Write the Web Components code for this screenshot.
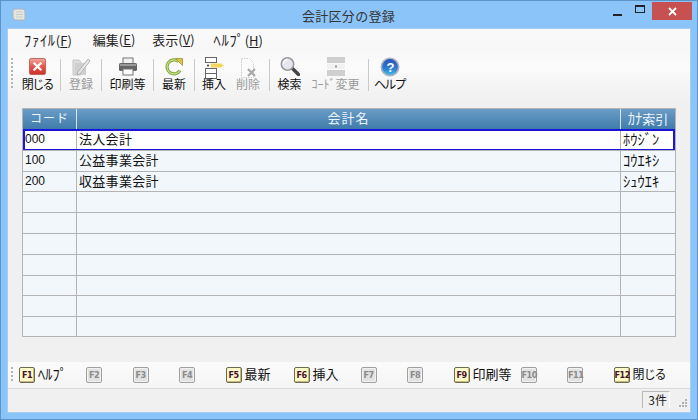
<!DOCTYPE html>
<html lang="ja">
<head>
<meta charset="utf-8">
<title>会計区分の登録</title>
<style>
  html, body { margin: 0; padding: 0; height: 100%; overflow: hidden; }
  body { font-family: "Noto Sans CJK JP", "Liberation Sans", sans-serif; font-feature-settings: "palt"; }
</style>
</head>
<body>
<app-window>
  <title-bar title="会計区分の登録"></title-bar>
  <menu-bar></menu-bar>
  <tool-bar>
    <tool-button width="45" label="閉じる" style="letter-spacing:-.5px"><svg viewBox="0 0 20 20" width="19" height="19"><defs><linearGradient id="r" x1="0" y1="0" x2="0" y2="1"><stop offset="0" stop-color="#f4a9a0"/><stop offset=".5" stop-color="#e2574c"/><stop offset="1" stop-color="#c9302a"/></linearGradient></defs><rect x="1.500" y="1.500" width="17" height="17" rx="2" fill="url(#r)" stroke="#b9605c"/><path d="M6 6l8 8M14 6l-8 8" stroke="#fff" stroke-width="2.400"/></svg></tool-button>
    <tool-sep></tool-sep>
    <tool-button width="40" label="登録" disabled><svg viewBox="0 0 20 20" width="20" height="20"><path d="M2 3h6l2 2v13H2z" fill="#dcdcdc" stroke="#c8c8c8"/><path d="M4 6h11v12H4z" fill="#cfcfcf"/><path d="M7 15L17 2l2 2L9 17l-3 1z" fill="#e8e8e8" stroke="#b0b0b0"/></svg></tool-button>
    <tool-sep></tool-sep>
    <tool-button width="51" label="印刷等"><svg viewBox="0 0 20 20" width="20" height="20"><rect x="5" y="1" width="10" height="6" fill="#f2f2f2" stroke="#777"/><rect x="1" y="6" width="18" height="8" rx="1.500" fill="#666"/><rect x="2" y="7" width="16" height="2" fill="#999"/><rect x="5" y="12" width="10" height="6" fill="#fafafa" stroke="#777"/></svg></tool-button>
    <tool-sep></tool-sep>
    <tool-button width="40" label="最新"><svg viewBox="0 0 20 20" width="20" height="20"><path d="M16 13.500A7 7 0 1 1 14.500 4.500" fill="none" stroke="#7fa63a" stroke-width="3.200"/><path d="M16 13.500A7 7 0 1 1 14.500 4.500" fill="none" stroke="#c9e08a" stroke-width="1.200"/><path d="M11.500 1.500h7v7z" fill="#e0c23c" stroke="#97862a" stroke-width=".7"/></svg></tool-button>
    <tool-sep></tool-sep>
    <tool-button width="38" label="挿入"><svg viewBox="0 0 20 22" width="20" height="22"><rect x="1.500" y=".5" width="11" height="5" fill="#fff" stroke="#666"/><rect x="1.500" y="11.500" width="11" height="5" fill="#fff" stroke="#666"/><rect x="1.500" y="16.500" width="11" height="5" fill="#fff" stroke="#666"/><circle cx="4" cy="8.500" r="1" fill="#333"/><path d="M7 6.500h10l3 2-3 2H7z" fill="#f2d35c"/></svg></tool-button>
    <tool-button width="36" label="削除" disabled style="padding-right:6px"><svg viewBox="0 0 20 22" width="20" height="22"><path d="M3.500 1.500h8l4 4v15h-12z" fill="#fbfbfb" stroke="#ccc" stroke-dasharray="1.500 1"/><path d="M10 12l7 7M17 12l-7 7" stroke="#a8a8a8" stroke-width="2.200"/></svg></tool-button>
    <tool-sep></tool-sep>
    <tool-button width="39" label="検索"><svg viewBox="0 0 20 19" width="20" height="19"><path d="M12.500 11.500l6 6" stroke="#444" stroke-width="3.400" stroke-linecap="round"/><circle cx="7.500" cy="7" r="6.200" fill="#e4e8ee" stroke="#9a9a9a" stroke-width="1.600"/><path d="M3.500 6.500a4 4 0 0 1 4-4" stroke="#fff" stroke-width="1.500" fill="none"/></svg></tool-button>
    <tool-button width="59" label="ｺｰﾄﾞ変更" disabled style="padding-right:6px"><svg viewBox="0 0 20 19" width="20" height="19"><rect x="1" y="0" width="18" height="6" fill="#cfcfcf"/><rect x="1" y="13" width="18" height="6" fill="#cfcfcf"/><rect x="1" y="7" width="18" height="5" fill="#f2f2f2"/><rect x="9" y="8.500" width="2" height="2" fill="#999"/></svg></tool-button>
    <tool-sep></tool-sep>
    <tool-button width="41" label="ヘルプ" style="letter-spacing:-1px"><svg viewBox="0 0 20 20" width="20" height="20"><defs><linearGradient id="b" x1="0" y1="0" x2="0" y2="1"><stop offset="0" stop-color="#2a4fb8"/><stop offset=".6" stop-color="#2f7fd0"/><stop offset="1" stop-color="#45c0e8"/></linearGradient></defs><circle cx="10" cy="10" r="8.700" fill="url(#b)" stroke="#a9b4c4" stroke-width="1.600"/><text x="10" y="14.500" text-anchor="middle" font-family="Liberation Sans" font-weight="700" font-size="13" fill="#fff">?</text></svg></tool-button>
  </tool-bar>
  <data-grid></data-grid>
  <fkey-bar>
    <fkey-item width="67" on kana label="ﾍﾙﾌﾟ">F1</fkey-item>
    <fkey-item width="46.500">F2</fkey-item>
    <fkey-item width="46.500">F3</fkey-item>
    <fkey-item width="46.500">F4</fkey-item>
    <fkey-item width="68" on label="最新">F5</fkey-item>
    <fkey-item width="67" on label="挿入">F6</fkey-item>
    <fkey-item width="46.500">F7</fkey-item>
    <fkey-item width="46.500">F8</fkey-item>
    <fkey-item width="67" on label="印刷等">F9</fkey-item>
    <fkey-item width="46.500">F10</fkey-item>
    <fkey-item width="46.500">F11</fkey-item>
    <fkey-item width="60" on label="閉じる" style="font-size:12px">F12</fkey-item>
  </fkey-bar>
  <status-bar>3件</status-bar>
</app-window>

<script>
class AppWindow extends HTMLElement {
  constructor() {
    super();
    this.attachShadow({mode: 'open'}).innerHTML = `
      <style>
        :host {
          display: block;
          box-sizing: border-box;
          width: 698px;
          height: 420px;
          background: #8bc4f8;
          border: 1px solid #5b94c8;
          padding: 0 7px 7px;
        }
        .client {
          display: flex;
          flex-direction: column;
          height: 100%;
        }
        ::slotted(title-bar) { margin: 0 -7px; }
        .inner {
          flex: 1;
          display: flex;
          flex-direction: column;
          background: #f0f0f0;
          box-shadow: 0 0 0 1px #a9cdee;
          min-height: 0;
        }
      </style>
      <div class="client"><slot name="title"></slot><div class="inner"><slot></slot></div></div>
    `;
  }
  connectedCallback() {
    this.querySelector('title-bar').slot = 'title';
  }
}

class TitleBar extends HTMLElement {
  constructor() {
    super();
    this.attachShadow({mode: 'open'}).innerHTML = `
      <style>
        :host {
          display: flex;
          align-items: flex-start;
          height: 28px;
          color: #333;
          font-size: 13px;
          font-feature-settings: normal;
        }
        .doc { margin: 7px 0 0 11px; }
        .name { flex: 1; text-align: center; line-height: 30px; padding-left: 65px; letter-spacing: .3px; }
        .btn { display: flex; align-items: center; justify-content: center; height: 18px; margin-top: 1px; }
        .min { width: 23px; }
        .max { width: 22px; margin-right: 1px; }
        .close { width: 40px; background: #c75050; margin-right: 5px; }
      </style>
      <svg class="doc" width="14" height="13" viewBox="0 0 14 13"><path d="M1 2l2-1h8l2 2v9H3l-2-2z" fill="#e6e6dc" stroke="#a8b4c0"/><path d="M4 4h7M4 6.500h7M4 9h7" stroke="#c6cdd4"/></svg>
      <span class="name"></span>
      <div class="btn min"><svg width="9" height="2" style="margin-top:7px"><rect width="9" height="2" fill="#222"/></svg></div>
      <div class="btn max"><svg width="10" height="8" style="margin-top:-5px"><rect x=".5" y=".5" width="9" height="7" fill="none" stroke="#222"/><rect x="1" y="1" width="8" height="1" fill="#222"/></svg></div>
      <div class="btn close"><svg width="9" height="9"><path d="M1 1l7 7M8 1L1 8" stroke="#fff" stroke-width="1.800"/></svg></div>
    `;
  }
  connectedCallback() {
    this.shadowRoot.querySelector('.name').textContent = this.getAttribute('title');
    this.removeAttribute('title');
  }
}

class MenuBar extends HTMLElement {
  constructor() {
    super();
    const items = [['ﾌｧｲﾙ', 'F', true, 0], ['編集', 'E', false, 21], ['表示', 'V', false, 17], ['ﾍﾙﾌﾟ', 'H', true, 19]];
    this.attachShadow({mode: 'open'}).innerHTML = `
      <style>
        :host {
          display: flex;
          box-sizing: border-box;
          height: 24px;
          align-items: center;
          padding: 0 0 3px 16px;
          background: linear-gradient(#f9f9fa, #f7f7f7);
          color: #222;
          font-size: 13px;
        }
        span { white-space: nowrap; }
        .k { font-size: 14.500px; letter-spacing: .7px; }
        u { text-underline-offset: 1px; }
      </style>
      ${items.map(([t, k, half, m]) => `<span style="margin-left:${m}px">${half ? `<span class="k">${t}</span>` : t}(<u>${k}</u>)</span>`).join('')}
    `;
  }
}

class ToolBar extends HTMLElement {
  constructor() {
    super();
    this.attachShadow({mode: 'open'}).innerHTML = `
      <style>
        :host {
          display: flex;
          align-items: flex-start;
          height: 48px;
          background: linear-gradient(#f8f8f8, #fbfbfb 30%, #f0f0f0);
        }
        .grip {
          width: 2px;
          height: 32px;
          margin: 5px 2px 0 3px;
          background: repeating-linear-gradient(#b4b4b4 0 2px, transparent 2px 4px);
        }
      </style>
      <div class="grip"></div><slot></slot>
    `;
  }
}

class ToolButton extends HTMLElement {
  constructor() {
    super();
    this.attachShadow({mode: 'open'}).innerHTML = `
      <style>
        :host {
          display: flex;
          flex: none;
          flex-direction: column;
          align-items: center;
          box-sizing: border-box;
          height: 40px;
          padding-top: 4px;
          color: #111;
          font-size: 12px;
        }
        :host([disabled]) { color: #9a9a9a; }
        .icon { height: 19px; display: flex; }
        .label { line-height: 15px; white-space: nowrap; }
      </style>
      <div class="icon"><slot></slot></div>
      <div class="label"></div>
    `;
  }
  connectedCallback() {
    this.style.width = this.getAttribute('width') + 'px';
    this.shadowRoot.querySelector('.label').textContent = this.getAttribute('label');
  }
}

class ToolSep extends HTMLElement {
  constructor() {
    super();
    this.attachShadow({mode: 'open'}).innerHTML = `
      <style>
        :host {
          display: block;
          flex: none;
          width: 1px;
          height: 32px;
          margin-top: 6px;
          background: #c9c9c9;
        }
      </style>
    `;
  }
}

class DataGrid extends HTMLElement {
  constructor() {
    super();
    const rows = [['000', '法人会計', 'ﾎｳｼﾞﾝ'], ['100', '公益事業会計', 'ｺｳｴｷｼ'], ['200', '収益事業会計', 'ｼｭｳｴｷ']];
    while (rows.length < 10) rows.push(['', '', '']);
    this.attachShadow({mode: 'open'}).innerHTML = `
      <style>
        :host {
          display: block;
          margin: 7px 14px 0;
          height: 229px;
          flex: none;
          box-sizing: border-box;
          background: #f2f7fc;
          border: 1px solid #b4b4b4;
        }
        .row, .head {
          display: grid;
          grid-template-columns: 53px 1fr 55px;
        }
        .head {
          height: 20px;
          background: linear-gradient(#6a9cc6, #3f7cab);
          color: #eef5fb;
          font-size: 13px;
          line-height: 18px;
          text-align: center;
          font-feature-settings: normal;
        }
        .head div + div { border-left: 1px solid #d8e6f2; }
        .head .code { letter-spacing: 1px; font-size: 12px; }
        .head .name { letter-spacing: 1px; }
        .head .k { font-size: 14.500px; }
        .row {
          height: 20.800px;
          box-sizing: border-box;
          border-top: 1px solid #b4b4b4;
          position: relative;
          color: #111;
        }
        .row:first-of-type { border-top: 0; }
        .row.white { background: #fff; }
        .row div { padding-left: 2px; font-size: 13px; line-height: 18px; white-space: nowrap; }
        .row div + div { border-left: 1px solid #b4b4b4; }
        .row .code { font-family: "Liberation Sans", sans-serif; font-size: 12px; line-height: 19px; }
        .row .name { letter-spacing: .3px; font-feature-settings: normal; }
        .row .kana { font-size: 14.500px; }
        .focus {
          position: absolute;
          inset: -1px 0 -1px 0;
          border: 2px solid #1c14d8;
          pointer-events: none;
        }
      </style>
      <div class="head"><div class="code">コード</div><div class="name">会計名</div><div><span class="k">ｶﾅ</span>索引</div></div>
      ${rows.map((r, i) => `
        <div class="row ${i < 1 ? 'white' : ''}">
          <div class="code">${r[0]}</div><div class="name">${r[1]}</div><div class="kana">${r[2]}</div>
          ${i === 0 ? '<span class="focus"></span>' : ''}
        </div>`).join('')}
    `;
  }
}

class FkeyBar extends HTMLElement {
  constructor() {
    super();
    this.attachShadow({mode: 'open'}).innerHTML = `
      <style>
        :host {
          display: flex;
          align-items: center;
          flex: none;
          margin-top: 25px;
          height: 27px;
          padding-left: 2px;
          box-sizing: border-box;
          background: linear-gradient(#fbfbfb, #f5f5f5);
          border-bottom: 1px solid #d9d9d9;
        }
        .grip {
          width: 2px;
          height: 16px;
          margin: 0 6px 0 1px;
          background: repeating-linear-gradient(#b4b4b4 0 2px, transparent 2px 4px);
        }
      </style>
      <div class="grip"></div><slot></slot>
    `;
  }
}

class FkeyItem extends HTMLElement {
  constructor() {
    super();
    this.attachShadow({mode: 'open'}).innerHTML = `
      <style>
        :host {
          display: flex;
          align-items: center;
          flex: none;
          color: #111;
          font-size: 13px;
        }
        .cap {
          box-sizing: border-box;
          width: 16px;
          height: 16px;
          flex: none;
          border: 1px solid #a0a0a0;
          border-radius: 2px;
          background: #e2e2e2;
          color: #8a8a8a;
          font: 700 9px/14px "DejaVu Sans Condensed", "Liberation Sans", sans-serif;
          text-align: center;
          letter-spacing: -.5px;
          box-shadow: inset 0 0 0 1px #f2f2f2;
        }
        :host([on]) .cap {
          background: #fdfbc8;
          color: #4a1030;
          border-color: #6e6a50;
          box-shadow: inset -1px -1px 0 #c8b878;
        }
        .label { margin-left: 3px; white-space: nowrap; line-height: 18px; margin-bottom: 2px; }
        :host([kana]) .label { font-size: 14.500px; }
      </style>
      <div class="cap"><slot></slot></div><div class="label"></div>
    `;
  }
  connectedCallback() {
    this.style.width = this.getAttribute('width') + 'px';
    this.shadowRoot.querySelector('.label').textContent = this.getAttribute('label') || '';
  }
}

class StatusBar extends HTMLElement {
  constructor() {
    super();
    this.attachShadow({mode: 'open'}).innerHTML = `
      <style>
        :host {
          display: flex;
          justify-content: flex-end;
          align-items: flex-end;
          flex: 1;
          min-height: 0;
          font-size: 12px;
          color: #222;
          position: relative;
        }
        .count {
          box-sizing: border-box;
          width: 28px;
          height: 17px;
          margin: 0 20px 4px 0;
          padding-right: 2px;
          text-align: right;
          line-height: 16px;
          border-top: 1px solid #b9b9b9;
          border-left: 1px solid #b9b9b9;
          border-right: 1px solid #fff;
        }
        .grip { position: absolute; right: 2px; bottom: 3px; }
      </style>
      <div class="count"><slot></slot></div>
      <svg class="grip" width="11" height="11"><path d="M8 1h2v2H8zM5 4h2v2H5zM8 4h2v2H8zM2 7h2v2H2zM5 7h2v2H5zM8 7h2v2H8z" fill="#b0b0b0"/></svg>
    `;
  }
}

customElements.define('app-window', AppWindow);
customElements.define('title-bar', TitleBar);
customElements.define('menu-bar', MenuBar);
customElements.define('tool-bar', ToolBar);
customElements.define('tool-button', ToolButton);
customElements.define('tool-sep', ToolSep);
customElements.define('data-grid', DataGrid);
customElements.define('fkey-bar', FkeyBar);
customElements.define('fkey-item', FkeyItem);
customElements.define('status-bar', StatusBar);
</script>
</body>
</html>
